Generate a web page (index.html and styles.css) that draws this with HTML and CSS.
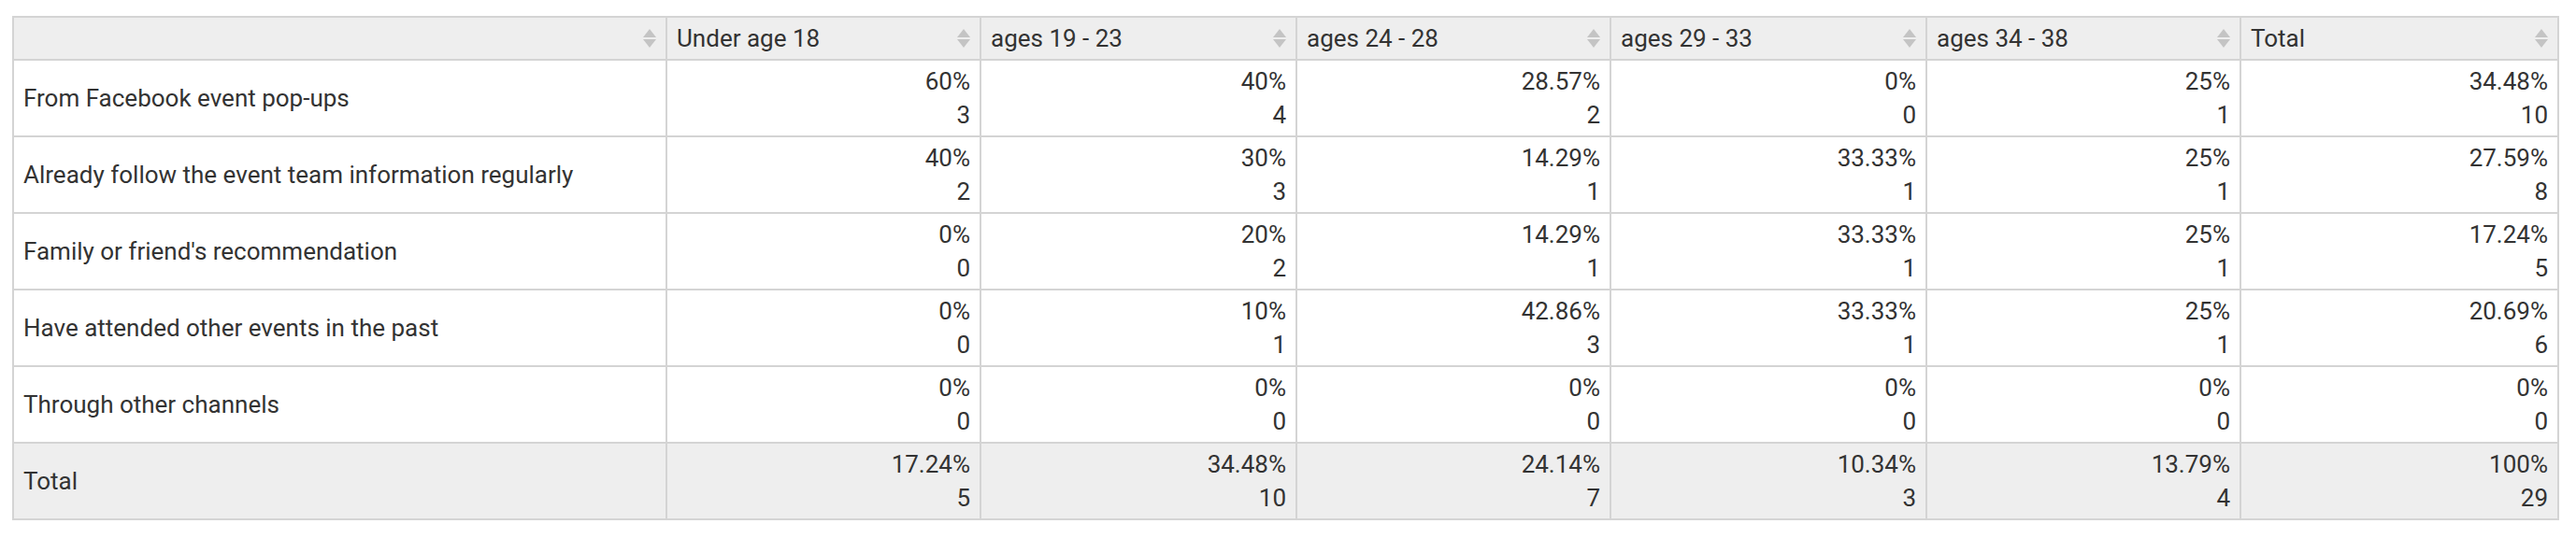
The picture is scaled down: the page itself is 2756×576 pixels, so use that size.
FILE: index.html
```html
<!DOCTYPE html>
<html>
<head>
<meta charset="utf-8">
<link rel="stylesheet" href="styles.css">
</head>
<body>
<table class="pivot">
  <colgroup>
    <col class="c-label">
    <col class="c-a">
    <col class="c-b">
    <col class="c-a">
    <col class="c-b">
    <col class="c-a">
    <col class="c-c">
  </colgroup>
  <thead>
    <tr>
      <th><div class="hcell"><span></span><svg class="sort" viewBox="0 0 14 20"><path d="M7 0L14 9H0Z"/><path d="M0 11H14L7 20Z"/></svg></div></th>
      <th><div class="hcell"><span>Under age 18</span><svg class="sort" viewBox="0 0 14 20"><path d="M7 0L14 9H0Z"/><path d="M0 11H14L7 20Z"/></svg></div></th>
      <th><div class="hcell"><span>ages 19 - 23</span><svg class="sort" viewBox="0 0 14 20"><path d="M7 0L14 9H0Z"/><path d="M0 11H14L7 20Z"/></svg></div></th>
      <th><div class="hcell"><span>ages 24 - 28</span><svg class="sort" viewBox="0 0 14 20"><path d="M7 0L14 9H0Z"/><path d="M0 11H14L7 20Z"/></svg></div></th>
      <th><div class="hcell"><span>ages 29 - 33</span><svg class="sort" viewBox="0 0 14 20"><path d="M7 0L14 9H0Z"/><path d="M0 11H14L7 20Z"/></svg></div></th>
      <th><div class="hcell"><span>ages 34 - 38</span><svg class="sort" viewBox="0 0 14 20"><path d="M7 0L14 9H0Z"/><path d="M0 11H14L7 20Z"/></svg></div></th>
      <th><div class="hcell"><span>Total</span><svg class="sort" viewBox="0 0 14 20"><path d="M7 0L14 9H0Z"/><path d="M0 11H14L7 20Z"/></svg></div></th>
    </tr>
  </thead>
  <tbody>
    <tr>
      <td class="label">From Facebook event pop-ups</td>
      <td class="num">60%<br>3</td>
      <td class="num">40%<br>4</td>
      <td class="num">28.57%<br>2</td>
      <td class="num">0%<br>0</td>
      <td class="num">25%<br>1</td>
      <td class="num">34.48%<br>10</td>
    </tr>
    <tr>
      <td class="label">Already follow the event team information regularly</td>
      <td class="num">40%<br>2</td>
      <td class="num">30%<br>3</td>
      <td class="num">14.29%<br>1</td>
      <td class="num">33.33%<br>1</td>
      <td class="num">25%<br>1</td>
      <td class="num">27.59%<br>8</td>
    </tr>
    <tr>
      <td class="label">Family or friend's recommendation</td>
      <td class="num">0%<br>0</td>
      <td class="num">20%<br>2</td>
      <td class="num">14.29%<br>1</td>
      <td class="num">33.33%<br>1</td>
      <td class="num">25%<br>1</td>
      <td class="num">17.24%<br>5</td>
    </tr>
    <tr>
      <td class="label">Have attended other events in the past</td>
      <td class="num">0%<br>0</td>
      <td class="num">10%<br>1</td>
      <td class="num">42.86%<br>3</td>
      <td class="num">33.33%<br>1</td>
      <td class="num">25%<br>1</td>
      <td class="num">20.69%<br>6</td>
    </tr>
    <tr>
      <td class="label">Through other channels</td>
      <td class="num">0%<br>0</td>
      <td class="num">0%<br>0</td>
      <td class="num">0%<br>0</td>
      <td class="num">0%<br>0</td>
      <td class="num">0%<br>0</td>
      <td class="num">0%<br>0</td>
    </tr>
    <tr class="total">
      <td class="label">Total</td>
      <td class="num">17.24%<br>5</td>
      <td class="num">34.48%<br>10</td>
      <td class="num">24.14%<br>7</td>
      <td class="num">10.34%<br>3</td>
      <td class="num">13.79%<br>4</td>
      <td class="num">100%<br>29</td>
    </tr>
  </tbody>
</table>
</body>
</html>
```

FILE: styles.css
```css
html, body {
  margin: 0;
  background: #ffffff;
}
body {
  padding: 17px 0 0 13px;
  font-family: Roboto, "Liberation Sans", sans-serif;
  font-size: 26px;
  color: #333333;
}
.pivot {
  border-collapse: collapse;
  table-layout: fixed;
  width: 2723px;
}
.c-label { width: 699px; }
.c-a { width: 336px; }
.c-b { width: 338px; }
.c-c { width: 340px; }
.pivot th,
.pivot td {
  border: 2px solid #d4d4d4;
  padding: 0 10px;
}
.pivot th {
  background: #eeeeee;
  height: 44px;
  font-weight: normal;
  text-align: left;
}
.hcell {
  display: flex;
  align-items: center;
  justify-content: space-between;
  line-height: 30px;
}
.sort {
  width: 14px;
  height: 20px;
  fill: #c4c4c4;
  flex: none;
}
.pivot td {
  height: 80px;
  line-height: 36px;
  vertical-align: middle;
}
.pivot td.num {
  text-align: right;
}
.pivot tr.total td {
  background: #eeeeee;
}
```
